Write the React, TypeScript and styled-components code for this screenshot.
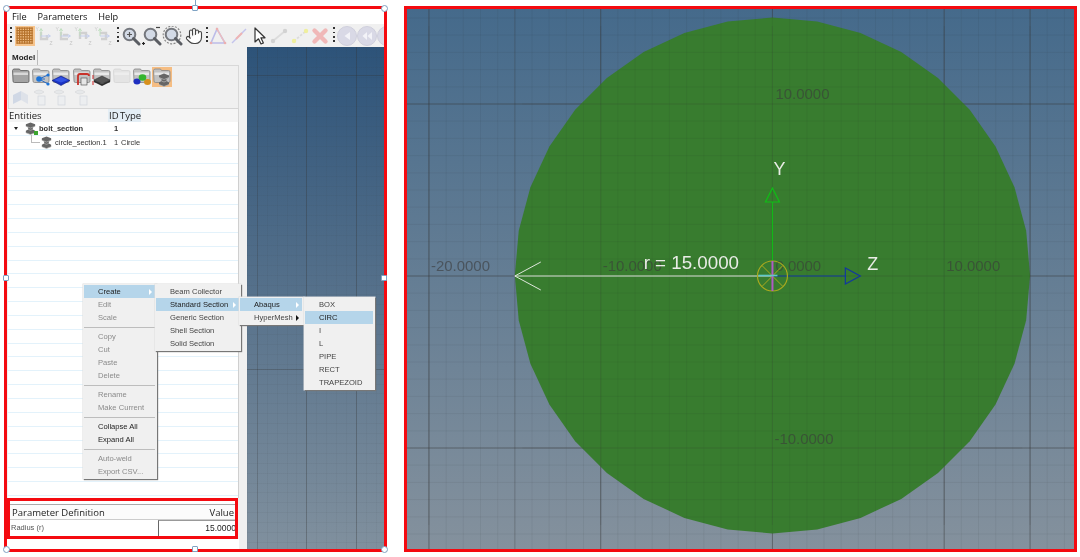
import React from "react";
import styled, { createGlobalStyle } from "styled-components";
import { Hand } from "lucide-react";

const GlobalStyle = createGlobalStyle`
  html, body { margin: 0; padding: 0; background: #fff; }
  body { font-family: "Liberation Sans", Arial, sans-serif; }
`;

const Page = styled.div`
  width: 1080px;
  height: 557px;
  box-sizing: border-box;
  padding: 6px 3px 5px 4px;
  display: flex;
  gap: 17px;
  overflow: hidden;
  background: #fff;
`;

const RED = "#f40a10";

const LeftFrame = styled.div`
  position: relative;
  width: 383px;
  flex: none;
  box-sizing: border-box;
  border: 3px solid ${RED};
  display: flex;
  flex-direction: column;
  background: #fff;
  filter: blur(0.45px);
`;

const MenuBar = styled.div`
  height: 15px;
  flex: none;
  display: flex;
  align-items: center;
  gap: 11px;
  padding-left: 5px;
  font-family: "Open Sans", sans-serif;
  font-size: 9.2px;
  color: #111;
`;

const Toolbar = styled.div`
  height: 23px;
  flex: none;
  display: flex;
  align-items: center;
  padding-left: 3px;
  background: #f0f0f0;
  overflow: hidden;
`;

const Dots = styled.span<{ $l: number; $r: number }>`
  flex: none;
  width: 2px;
  height: 18px;
  margin: 0 ${(p) => p.$r}px 0 ${(p) => p.$l}px;
  background: repeating-linear-gradient(to bottom, #333 0 1.5px, transparent 1.5px 4.5px);
`;

const ToolCell = styled.span<{ $w: number; $on?: boolean; $faded?: boolean }>`
  flex: none;
  width: ${(p) => p.$w}px;
  height: 20px;
  display: flex;
  align-items: center;
  justify-content: center;
  opacity: ${(p) => (p.$faded ? 0.6 : 1)};
  ${(p) => p.$on && "background: #f6c48d;"}
  svg { display: block; }
`;

const Body = styled.div`
  flex: 1;
  min-height: 0;
  display: flex;
`;

const SidePanel = styled.div`
  width: 240px;
  flex: none;
  display: flex;
  flex-direction: column;
  background: #f0f0f0;
`;

const TabStrip = styled.div`
  height: 18px;
  flex: none;
  display: flex;
  align-items: flex-end;
  padding-left: 4px;
`;

const Tab = styled.div`
  width: 27px;
  height: 15px;
  box-sizing: border-box;
  border-right: 1px solid #bbb;
  font-size: 8px;
  font-weight: bold;
  line-height: 15px;
  padding-left: 1px;
  color: #222;
`;

const IconPanel = styled.div`
  height: 43px;
  flex: none;
  box-sizing: border-box;
  margin: 0 8px 0 1px;
  border: 1px solid #d8d8d8;
  border-bottom: none;
  padding: 1px 0 0 2px;
  display: grid;
  grid-template-columns: repeat(8, 20.2px);
  grid-auto-rows: 20px;
  justify-content: start;
`;

const TreeHeader = styled.div`
  height: 14px;
  flex: none;
  margin: 0 8px 0 1px;
  display: grid;
  grid-template-columns: 100px 11px 22px 1fr;
  align-items: center;
  background: #f5f5f5;
  border-top: 1px solid #d5d5d5;
  border-right: 1px solid #d5d5d5;
  box-sizing: border-box;
  font-family: "Open Sans", sans-serif;
  font-size: 9.5px;
  color: #222;
`;

const HeaderCell = styled.span<{ $tint?: boolean }>`
  height: 100%;
  padding-left: 1px;
  line-height: 13px;
  white-space: nowrap;
  ${(p) => p.$tint && "background: #e4eef5;"}
`;

const Tree = styled.div`
  flex: 1;
  min-height: 0;
  margin: 0 8px 0 1px;
  border-right: 1px solid #cfcfcf;
  background: #fff repeating-linear-gradient(
    to bottom,
    transparent 0 12.85px,
    #e3f2fb 12.85px 13.85px
  );
`;

const TreeRow = styled.div`
  height: 13.85px;
  display: grid;
  grid-template-columns: 106px 7px 1fr;
  align-items: center;
  font-size: 7.5px;
  color: #333;
`;

const TreeName = styled.div<{ $indent: number; $bold?: boolean }>`
  display: flex;
  align-items: center;
  padding-left: ${(p) => p.$indent}px;
  font-weight: ${(p) => (p.$bold ? "bold" : "normal")};
  white-space: nowrap;
  gap: 1px;
`;

const Caret = styled.span`
  width: 0;
  height: 0;
  margin-right: 5px;
  border-left: 2.5px solid transparent;
  border-right: 2.5px solid transparent;
  border-top: 3px solid #222;
`;

const Elbow = styled.span`
  width: 9px;
  height: 8px;
  margin: -8px -1px 0 0;
  box-sizing: border-box;
  border-left: 1px solid #bbb;
  border-bottom: 1px solid #bbb;
`;

const Params = styled.div`
  height: 41px;
  flex: none;
  width: 231px;
  box-sizing: border-box;
  border: 3px solid ${RED};
  background: #fff;
  padding-top: 3px;
  display: flex;
  flex-direction: column;
  overflow: hidden;
`;

const ParamHead = styled.div`
  height: 16px;
  flex: none;
  box-sizing: border-box;
  border-top: 1.5px solid #aaa;
  border-bottom: 1px solid #ccc;
  background: #fbfbfb;
  display: grid;
  grid-template-columns: 148px 1fr;
  align-items: center;
  padding-left: 2px;
  font-family: "Open Sans", sans-serif;
  font-size: 9.5px;
  color: #222;
`;

const RightText = styled.span`
  text-align: right;
  padding-right: 1px;
`;

const ParamRow = styled.div`
  flex: 1;
  display: grid;
  grid-template-columns: 148px 1fr;
  font-size: 7.5px;
  color: #555;
  align-items: stretch;
`;

const ParamLabel = styled.span`
  line-height: 15px;
  padding-left: 1px;
`;

const ValueCell = styled.span`
  border-top: 1px solid #999;
  border-left: 1.5px solid #666;
  text-align: right;
  font-size: 8.5px;
  line-height: 14px;
  color: #222;
  margin-right: -1px;
`;

const PanelFoot = styled.div`
  height: 10px;
  flex: none;
  width: 232px;
  background: #fff;
`;

const LeftViewport = styled.div`
  flex: 1;
  background:
    linear-gradient(to right, transparent 59.5px, rgba(50,50,50,.3) 59.5px 60.5px, transparent 60.5px),
    linear-gradient(to right, transparent 109.5px, rgba(50,50,50,.3) 109.5px 110.5px, transparent 110.5px),
    linear-gradient(to right, transparent 10.5px, rgba(50,50,50,.2) 10.5px 11.5px, transparent 11.5px),
    linear-gradient(to bottom, transparent 28.5px, rgba(50,50,50,.3) 28.5px 29.5px, transparent 29.5px),
    linear-gradient(to bottom, transparent 322.5px, rgba(50,50,50,.3) 322.5px 323.5px, transparent 323.5px),
    repeating-linear-gradient(to right, rgba(50,50,50,.05) 0 1px, transparent 1px 9.9px),
    repeating-linear-gradient(to bottom, rgba(50,50,50,.05) 0 1px, transparent 1px 9.9px),
    linear-gradient(to bottom, #2d5379 0%, #80909e 100%);
`;

const MenuBox = styled.div<{ $x: number; $y: number; $w: number; $pad: number }>`
  position: absolute;
  left: ${(p) => p.$x - 7}px;
  top: ${(p) => p.$y - 9}px;
  width: ${(p) => p.$w}px;
  box-sizing: border-box;
  padding: 1px 2px 1px 1px;
  background: #f0f0f0;
  box-shadow: 1px 1px 1px #777, 0 0 0 0.5px #ddd;
  font-size: 7.6px;
  --pad: ${(p) => p.$pad}px;
`;

const MenuItem = styled.div<{ $on?: boolean; $dim?: boolean; $strong?: boolean }>`
  position: relative;
  height: 13px;
  line-height: 13px;
  padding-left: var(--pad);
  white-space: nowrap;
  color: ${(p) => (p.$dim ? "#8a8a8a" : p.$strong ? "#222" : "#444")};
  ${(p) => p.$on && "background: #b5d5ea; color: #222;"}
`;

const MenuSep = styled.div`
  height: 1px;
  margin: 2.5px 0;
  background: #bdbdbd;
`;

const SubArrow = styled.span<{ $dark?: boolean }>`
  position: absolute;
  right: 3px;
  top: 3.5px;
  width: 0;
  height: 0;
  border-top: 3px solid transparent;
  border-bottom: 3px solid transparent;
  border-left: 3px solid ${(p) => (p.$dark ? "#111" : "#fff")};
`;

const Handle = styled.span<{ $x: number; $y: number; $round?: boolean }>`
  position: absolute;
  left: ${(p) => p.$x - 7}px;
  top: ${(p) => p.$y - 9}px;
  width: ${(p) => (p.$round ? 7 : 6)}px;
  height: ${(p) => (p.$round ? 7 : 6)}px;
  margin: ${(p) => (p.$round ? "-3.5px 0 0 -3.5px" : "-3px 0 0 -3px")};
  box-sizing: border-box;
  border: 1px solid #7fa3c4;
  border-radius: ${(p) => (p.$round ? "50%" : "1px")};
  background: #fff;
`;

const RotateLine = styled.span`
  position: absolute;
  left: 188px;
  top: -9px;
  width: 1px;
  height: 7px;
  background: #7fa3c4;
`;

const RightFrame = styled.div`
  flex: 1;
  box-sizing: border-box;
  border: 3px solid ${RED};
  background: linear-gradient(to bottom, #456a8b 0%, #84919d 100%);
`;

const CanvasSvg = styled.svg`
  display: block;
  width: 100%;
  height: 100%;
  filter: blur(0.3px);
  font-family: "Liberation Sans", Arial, sans-serif;
`;

/* toolbar icons */
function GridIcon() {
  const bars = [1.5, 4, 6.5, 9, 11.5, 14, 16.5];
  return (
    <svg width="20" height="20" viewBox="0 0 20 20">
      {bars.map((b) => (
        <g key={b}>
          <rect x={b} y="1.5" width="1.2" height="16.2" fill="#b5722c" />
          <rect x="1.5" y={b} width="16.2" height="1.2" fill="#b5722c" />
        </g>
      ))}
    </svg>
  );
}

function AxisIcon({ shape }: { shape: string }) {
  return (
    <svg width="19" height="20" viewBox="0 0 19 20">
      <path d={shape} fill="none" stroke="#bdbdbd" strokeWidth="2.4" />
      <path d="M6 10V3M4.5 5 6 2.5 7.5 5" fill="none" stroke="#9fd59f" strokeWidth="1" />
      <path d="M6 10h9M13 8.5l2.5 1.5-2.5 1.5" fill="none" stroke="#a9b9ea" strokeWidth="1" />
      <text x="0.5" y="5" fontSize="5" fill="#aaa">Y</text>
      <text x="14.5" y="19" fontSize="5" fill="#aaa">Z</text>
    </svg>
  );
}

function ZoomIcon({ kind }: { kind: "plus" | "box" | "gear" }) {
  return (
    <svg width="21" height="20" viewBox="0 0 21 20">
      {kind === "gear" && <circle cx="10" cy="9" r="8.8" fill="none" stroke="#888" strokeWidth="1.2" strokeDasharray="2 1.4" />}
      <circle cx="9.5" cy="8.5" r="5.8" fill="#d3dae6" stroke="#74777d" strokeWidth="2" />
      <path d="M13.5 12.5 19 18" stroke="#5a5d63" strokeWidth="3" strokeLinecap="round" />
      {kind === "plus" && <path d="M7 8.5h5M9.5 6v5" stroke="#555" strokeWidth="1.2" />}
      {kind === "box" && <path d="M15 1.5h4" stroke="#444" strokeWidth="1.2" />}
      {kind === "box" && <path d="M1 17.5h3M2.5 16v3" stroke="#222" strokeWidth="1.2" />}
    </svg>
  );
}

function TriangleIcon() {
  return (
    <svg width="20" height="20" viewBox="0 0 20 20">
      <path d="M9 3 3 17h14Z" fill="none" stroke="#bcbce8" strokeWidth="1.6" />
      <path d="M9 3l8 14" stroke="#eebdbd" strokeWidth="1.4" />
      <circle cx="9" cy="3" r="1.3" fill="#ecb0b0" />
      <circle cx="3" cy="17" r="1.3" fill="#ecb0b0" />
      <circle cx="17" cy="17" r="1.3" fill="#ecb0b0" />
    </svg>
  );
}

function SlashIcon() {
  return (
    <svg width="20" height="20" viewBox="0 0 20 20">
      <path d="M3 17 17 3" stroke="#c4c4ec" strokeWidth="1.4" />
      <path d="M7 13l6-6" stroke="#eeb4b4" strokeWidth="2" />
    </svg>
  );
}

function ArrowIcon() {
  return (
    <svg width="20" height="20" viewBox="0 0 20 20">
      <path d="M6 2v14l3.5-3.2 2.5 5.2 2.400-1.100-2.500-5.100H16Z" fill="#fff" stroke="#333" strokeWidth="1.2" strokeLinejoin="round" />
    </svg>
  );
}

function NodeLineIcon({ dashed }: { dashed?: boolean }) {
  return (
    <svg width="20" height="20" viewBox="0 0 20 20">
      <path d="M4 15 16 5" stroke="#dcdcdc" strokeWidth="1.8" strokeDasharray={dashed ? "2.5 1.5" : undefined} />
      <circle cx="4" cy="15" r="2.2" fill={dashed ? "#efef9e" : "#d2d2d2"} />
      <circle cx="16" cy="5" r="2.2" fill={dashed ? "#efef9e" : "#d2d2d2"} />
    </svg>
  );
}

function CrossIcon() {
  return (
    <svg width="20" height="20" viewBox="0 0 20 20">
      <path d="M4.5 4.5l11 11M15.5 4.5l-11 11" stroke="#f0b8b8" strokeWidth="4.4" strokeLinecap="round" />
    </svg>
  );
}

function PlayBackIcon({ double }: { double?: boolean }) {
  return (
    <svg width="20" height="20" viewBox="0 0 20 20">
      <circle cx="10" cy="10" r="9.500" fill="#d9d9e6" stroke="#cfcfdc" />
      <path d={double ? "M10 6 5.5 10 10 14ZM15 6l-4.500 4L15 14Z" : "M13 6 7.5 10l5.500 4Z"} fill="#f3f3f8" />
    </svg>
  );
}

/* model browser icons */
function Folder({ children, faded, solid }: { children?: React.ReactNode; faded?: boolean; solid?: boolean }) {
  return (
    <svg width="20" height="20" viewBox="0 0 20 20" opacity={faded ? 0.25 : 1}>
      <path d="M1.5 3.5 2.5 2h6l1 1.500h7q1.500 0 1.500 1.500v9q0 1.500-1.500 1.500h-13q-1.500 0-1.500-1.500Z" fill={solid ? "#a4a4a4" : "#c2c2c2"} stroke={solid ? "#5c5c5c" : "#858585"} strokeWidth=".8" />
      <path d="M2.5 5.5h14.500v2.500H2.5Z" fill={solid ? "#d8d8d8" : "#e8e8e8"} />
      {children}
    </svg>
  );
}

function Section({ x = 0, y = 0, size = 14 }: { x?: number; y?: number; size?: number }) {
  return (
    <svg x={x} y={y} width={size} height={size} viewBox="0 0 14 14">
      <path d="M2 2.5 7 .5l5 2v2L9.5 6v2L12 9.5v2l-5 2-5-2v-2L4.5 8V6L2 4.5Z" fill="#666" />
      <path d="M2 4.5 7 6.5l5-2M2 11.5l5 2 5-2M4.5 8 7 9l2.500-1" fill="none" stroke="#b8b8b8" strokeWidth=".7" />
    </svg>
  );
}

function FoldLayer() {
  return (
    <svg width="20" height="20" viewBox="0 0 20 20" opacity=".32">
      <path d="M2 8 10 4v9l-8 4Z" fill="#8ea9cf" />
      <path d="M10 4l7 4v9l-7-4Z" fill="#b9c6dc" />
    </svg>
  );
}

function EyePage({ v }: { v: number }) {
  return (
    <svg width="20" height="20" viewBox="0 0 20 20" opacity=".28">
      <path d="M3 5q5-4 10 0-5 4-10 0Z" fill="#cfd6de" stroke="#8a8f96" strokeWidth=".6" />
      <rect x={7 + v} y="9" width="7" height="9" fill="#e5eaf0" stroke="#8094ad" strokeWidth=".7" />
    </svg>
  );
}

const BrowserCell = styled.span<{ $on?: boolean }>`
  width: 20px;
  height: 20px;
  box-sizing: border-box;
  ${(p) => p.$on && "background: #f5bd83;"}
  svg { display: block; }
`;

const TreeIcon = styled.span<{ $badge?: boolean }>`
  position: relative;
  width: 13px;
  height: 13px;
  margin-right: 1px;
  flex: none;
  svg { display: block; }
  ${(p) =>
    p.$badge &&
    `&::after { content: ""; position: absolute; right: -1px; bottom: 0; width: 4px; height: 4px; background: #3ba52f; }`}
`;

function Viewport() {
  const cx = 773;
  const cy = 275.5;
  const r = 258;
  const poly = Array.from({ length: 36 }, (_, i) => {
    const a = (i * Math.PI) / 18;
    return `${(cx + r * Math.cos(a)).toFixed(1)},${(cy + r * Math.sin(a)).toFixed(1)}`;
  }).join(" ");
  const minorX = Array.from({ length: 40 }, (_, i) => 412 + ((773 - 412) % 17.2) + i * 17.2);
  const minorY = Array.from({ length: 32 }, (_, i) => 9 + ((276 - 9) % 17.2) + i * 17.2);
  const majorX = [429, 601, 773, 945, 1031];
  const majorY = [104, 276, 448];
  const labels: [string, number, number][] = [
    ["10.0000", 776, 99],
    ["-10.0000", 775, 444],
    ["-20.0000", 431, 271],
    ["-10.0000", 603, 271],
    ["0.0000", 776, 271],
    ["10.0000", 947, 271],
  ];
  return (
    <CanvasSvg viewBox="407 9 668 540" preserveAspectRatio="none">
      {/* heavy grid sits under the section, a lighter copy shows through it */}
      {majorX.map((x) => (
        <line key={x} x1={x} x2={x} y1="9" y2="549" stroke="#3c3c3c" strokeOpacity=".45" />
      ))}
      {majorY.map((y) => (
        <line key={y} x1="407" x2="1075" y1={y} y2={y} stroke="#3c3c3c" strokeOpacity=".45" />
      ))}
      <line x1="515" x2="515" y1="9" y2="549" stroke="#3c3c3c" strokeOpacity=".25" />
      <polygon points={poly} fill="#387c2f" />
      {minorX.map((x) => (
        <line key={x} x1={x} x2={x} y1="9" y2="549" stroke="#333" strokeOpacity=".07" />
      ))}
      {minorY.map((y) => (
        <line key={y} x1="407" x2="1075" y1={y} y2={y} stroke="#333" strokeOpacity=".07" />
      ))}
      {majorX.map((x) => (
        <line key={x} x1={x} x2={x} y1="26" y2="525" stroke="#3c3c3c" strokeOpacity=".14" />
      ))}
      {majorY.map((y) => (
        <line key={y} x1="523" x2="1023" y1={y} y2={y} stroke="#3c3c3c" strokeOpacity=".14" />
      ))}
      {labels.map(([t, x, y]) => (
        <text key={`${t}${x}`} x={x} y={y} fontSize="15" fill="#3a3a3a" fillOpacity=".6">{t}</text>
      ))}
      <path d="M515 276H773M515 276l26-14M515 276l26 14" fill="none" stroke="#dfe6dc" strokeWidth="1" />
      <path d="M773 276V202" stroke="#0fbe16" strokeWidth="1" />
      <path d="M773 188 766 202h14Z" fill="none" stroke="#0fbe16" strokeWidth="1.2" />
      <path d="M773 276H846" stroke="#12389f" strokeWidth="1" />
      <path d="M846 268v16l15-8Z" fill="none" stroke="#12389f" strokeWidth="1.2" />
      <circle cx="773" cy="276" r="15" fill="none" stroke="#a9a91f" strokeWidth="1.2" />
      <path d="M762.4 265.4 783.6 286.6M783.6 265.4 762.4 286.6" stroke="#a9a91f" />
      <path d="M773 261v30" stroke="#b05bc4" strokeWidth="2" />
      <path d="M759 275.5h19" stroke="#60c8c8" strokeWidth="1.6" />
      <text x="644" y="269" fontSize="18.8" fill="#e9ece6">r = 15.0000</text>
      <text x="774" y="175" fontSize="18" fill="#e9ece6">Y</text>
      <text x="868" y="270" fontSize="18" fill="#e9ece6">Z</text>
    </CanvasSvg>
  );
}

export default function App() {
  const handles: [number, number, boolean][] = [
    [6, 8, true], [384, 8, true], [6, 549, true], [384, 549, true],
    [195, 8, false], [195, 549, false], [6, 278, false], [384, 278, false],
  ];
  return (
    <Page>
      <GlobalStyle />
      <LeftFrame>
        <MenuBar>
          <span>File</span>
          <span>Parameters</span>
          <span>Help</span>
        </MenuBar>
        <Toolbar>
          <Dots $l={0} $r={3} />
          <ToolCell $w={20} $on><GridIcon /></ToolCell>
          <ToolCell $w={19.5} $faded><AxisIcon shape="M6 6v7h6v-4" /></ToolCell>
          <ToolCell $w={19.5} $faded><AxisIcon shape="M6 6v7h7M8 9h5" /></ToolCell>
          <ToolCell $w={19.5} $faded><AxisIcon shape="M6 13V7h6v6" /></ToolCell>
          <ToolCell $w={19.5} $faded><AxisIcon shape="M6 7h6v6H7" /></ToolCell>
          <Dots $l={4} $r={1} />
          <ToolCell $w={21}><ZoomIcon kind="plus" /></ToolCell>
          <ToolCell $w={21}><ZoomIcon kind="box" /></ToolCell>
          <ToolCell $w={21}><ZoomIcon kind="gear" /></ToolCell>
          <ToolCell $w={21}><Hand size={18} color="#444" fill="#fff" strokeWidth={1.5} /></ToolCell>
          <Dots $l={2} $r={0} />
          <ToolCell $w={20.4}><TriangleIcon /></ToolCell>
          <ToolCell $w={20.4}><SlashIcon /></ToolCell>
          <ToolCell $w={20.4}><ArrowIcon /></ToolCell>
          <ToolCell $w={20.4}><NodeLineIcon /></ToolCell>
          <ToolCell $w={20.4}><NodeLineIcon dashed /></ToolCell>
          <ToolCell $w={20.4}><CrossIcon /></ToolCell>
          <Dots $l={3} $r={2} />
          <ToolCell $w={20}><PlayBackIcon /></ToolCell>
          <ToolCell $w={20}><PlayBackIcon double /></ToolCell>
          <ToolCell $w={20}><PlayBackIcon /></ToolCell>
        </Toolbar>
        <Body>
          <SidePanel>
            <TabStrip><Tab>Model</Tab></TabStrip>
            <IconPanel>
              <BrowserCell><Folder solid /></BrowserCell>
              <BrowserCell>
                <Folder>
                  <path d="M8 12 17 8M8 12l9 5M8 12h6" stroke="#1c63c8" strokeWidth=".9" />
                  <circle cx="8" cy="12" r="2.8" fill="#1c74d8" />
                  <circle cx="17" cy="8" r="1.6" fill="#1c74d8" />
                  <circle cx="17" cy="17" r="1.6" fill="#1c74d8" />
                </Folder>
              </BrowserCell>
              <BrowserCell>
                <Folder><path d="M10 9l9 4.500-9 5-9-5Z" fill="#1b34c4" stroke="#0e1b7a" strokeWidth=".6" /><path d="M3 13l7-3 7 3-7 2.500Z" fill="#3454e4" /></Folder>
              </BrowserCell>
              <BrowserCell>
                <Folder><path d="M6 18V9q0-2 2-2h7q2 0 2 2" fill="none" stroke="#c8322a" strokeWidth="1.8" /><rect x="9" y="11" width="6" height="7" fill="#e6e6e6" stroke="#444" strokeWidth=".6" /></Folder>
              </BrowserCell>
              <BrowserCell>
                <Folder><path d="M10 9l8 4-8 4-8-4Z" fill="#555" stroke="#222" strokeWidth=".5" /><path d="M2 13v2l8 4 8-4v-2l-8 4Z" fill="#2e2e2e" /><path d="M1 8v4M1 14v4" stroke="#c22" strokeWidth="1" /></Folder>
              </BrowserCell>
              <BrowserCell><Folder faded /></BrowserCell>
              <BrowserCell>
                <Folder>
                  <ellipse cx="5" cy="14.5" rx="3.5" ry="3" fill="#1f2fc0" />
                  <ellipse cx="15.5" cy="15" rx="3.5" ry="3" fill="#d6901c" />
                  <ellipse cx="10.5" cy="10.5" rx="3.8" ry="3.2" fill="#35b52e" />
                </Folder>
              </BrowserCell>
              <BrowserCell $on><Folder><Section x={5} y={6} size={14} /></Folder></BrowserCell>
              <BrowserCell><FoldLayer /></BrowserCell>
              <BrowserCell><EyePage v={0} /></BrowserCell>
              <BrowserCell><EyePage v={0} /></BrowserCell>
              <BrowserCell><EyePage v={1} /></BrowserCell>
            </IconPanel>
            <TreeHeader>
              <HeaderCell>Entities</HeaderCell>
              <HeaderCell $tint>ID</HeaderCell>
              <HeaderCell $tint>Type</HeaderCell>
              <span />
            </TreeHeader>
            <Tree>
              <TreeRow>
                <TreeName $indent={6} $bold>
                  <Caret />
                  <TreeIcon $badge><svg width="13" height="13" viewBox="0 0 14 14"><Section /></svg></TreeIcon>
                  <span>bolt_section</span>
                </TreeName>
                <b>1</b>
                <span />
              </TreeRow>
              <TreeRow>
                <TreeName $indent={23}>
                  <Elbow />
                  <TreeIcon><svg width="13" height="13" viewBox="0 0 14 14"><Section /></svg></TreeIcon>
                  <span>circle_section.1</span>
                </TreeName>
                <span>1</span>
                <span>Circle</span>
              </TreeRow>
            </Tree>
            <Params>
              <ParamHead>
                <span>Parameter Definition</span>
                <RightText>Value</RightText>
              </ParamHead>
              <ParamRow>
                <ParamLabel>Radius (r)</ParamLabel>
                <ValueCell>15.0000</ValueCell>
              </ParamRow>
            </Params>
            <PanelFoot />
          </SidePanel>
          <LeftViewport />
        </Body>

        <MenuBox $x={83} $y={284} $w={74} $pad={14}>
          <MenuItem $on>Create<SubArrow /></MenuItem>
          <MenuItem $dim>Edit</MenuItem>
          <MenuItem $dim>Scale</MenuItem>
          <MenuSep />
          <MenuItem $dim>Copy</MenuItem>
          <MenuItem $dim>Cut</MenuItem>
          <MenuItem $dim>Paste</MenuItem>
          <MenuItem $dim>Delete</MenuItem>
          <MenuSep />
          <MenuItem $dim>Rename</MenuItem>
          <MenuItem $dim>Make Current</MenuItem>
          <MenuSep />
          <MenuItem $strong>Collapse All</MenuItem>
          <MenuItem $strong>Expand All</MenuItem>
          <MenuSep />
          <MenuItem $dim>Auto-weld</MenuItem>
          <MenuItem $dim>Export CSV...</MenuItem>
        </MenuBox>
        <MenuBox $x={155} $y={284} $w={86} $pad={14}>
          <MenuItem>Beam Collector</MenuItem>
          <MenuItem $on>Standard Section<SubArrow /></MenuItem>
          <MenuItem>Generic Section</MenuItem>
          <MenuItem>Shell Section</MenuItem>
          <MenuItem>Solid Section</MenuItem>
        </MenuBox>
        <MenuBox $x={239} $y={297} $w={65} $pad={14}>
          <MenuItem $on>Abaqus<SubArrow /></MenuItem>
          <MenuItem>HyperMesh<SubArrow $dark /></MenuItem>
        </MenuBox>
        <MenuBox $x={304} $y={297} $w={71} $pad={14}>
          <MenuItem>BOX</MenuItem>
          <MenuItem $on>CIRC</MenuItem>
          <MenuItem>I</MenuItem>
          <MenuItem>L</MenuItem>
          <MenuItem>PIPE</MenuItem>
          <MenuItem>RECT</MenuItem>
          <MenuItem>TRAPEZOID</MenuItem>
        </MenuBox>

        <RotateLine />
        {handles.map(([x, y, round]) => (
          <Handle key={`${x}-${y}`} $x={x} $y={y} $round={round} />
        ))}
      </LeftFrame>
      <RightFrame>
        <Viewport />
      </RightFrame>
    </Page>
  );
}
